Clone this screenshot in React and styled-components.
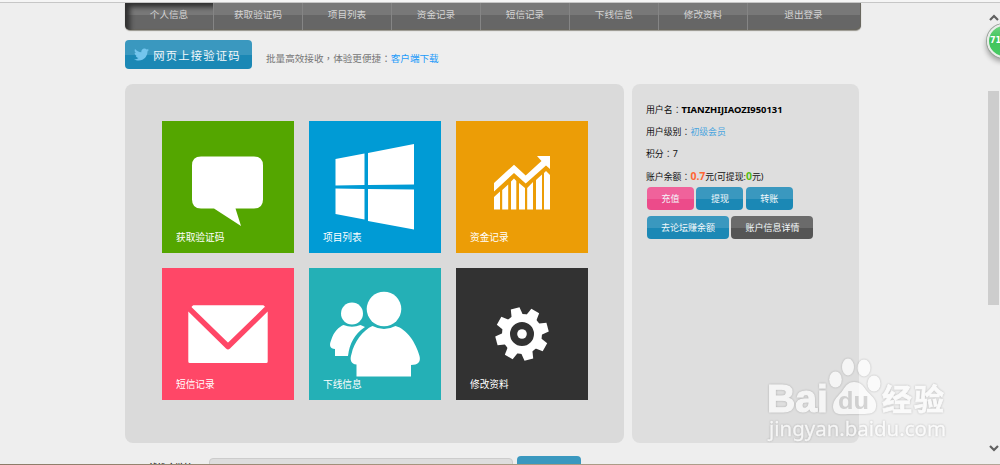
import React from 'react';
import styled, { createGlobalStyle, css } from 'styled-components';
import { FaTwitter } from 'react-icons/fa';

const GlobalStyle = createGlobalStyle`
  * {
    box-sizing: border-box;
  }

  body {
    margin: 0;
    background: #eeeeee;
    font-family: 'Noto Sans', 'Noto Sans CJK SC', sans-serif;
    overflow: hidden;
  }
`;

const Screen = styled.div`
  position: relative;
  display: flex;
  justify-content: space-between;
  width: 1000px;
  height: 465px;
  padding-top: 3px;
  background: linear-gradient(#f5f5f5 2px, #c6c6c6 2px, #c6c6c6 3px, #eeeeee 3px);
  overflow: hidden;
`;

const Content = styled.main`
  width: 736px;
  height: 462px;
  margin-left: 125px;
`;

const Nav = styled.nav`
  display: flex;
  height: 27px;
  border-radius: 0 0 5px 5px;
  background: linear-gradient(#787878 12px, #666666 12px);
  box-shadow: 0 1px 1px #96948c, inset -1px -1px 0 #69675f;
  overflow: hidden;
`;

const NavItem = styled.a`
  flex: ${({ $last }) => ($last ? '1' : '0 0 89px')};
  padding-right: ${({ $last }) => ($last ? 2 : 0)}px;
  font-size: 9.6px;
  line-height: 24px;
  text-align: center;
  color: #d4d4d4;
  border-right: ${({ $last }) => ($last ? 'none' : '1px solid #858585')};
  ${({ $active }) => $active && css`
    box-shadow: inset 5px 4px 5px #303030;
  `}
`;

const buttonColors = {
  blue: ['#3a98bf', '#1b88b5'],
  pink: ['#f0629b', '#ec4b8a'],
  gray: ['#6b6b6b', '#555555'],
};

const Button = styled.button`
  display: flex;
  align-items: center;
  justify-content: center;
  width: ${({ $width }) => $width}px;
  height: 23px;
  padding: 0;
  border: 0;
  border-radius: 4px;
  font: 9px 'Noto Sans', 'Noto Sans CJK SC', sans-serif;
  color: #f4f9fb;
  background: ${({ $color }) => {
    const [top, bottom] = buttonColors[$color];
    return `linear-gradient(${top} 50%, ${bottom} 50%)`;
  }};
`;

const Intro = styled.div`
  display: flex;
  height: 30px;
  margin-top: 10px;
`;

const OnlineButton = styled(Button)`
  height: 29px;
  gap: 4px;
  padding-right: 2px;
  font-size: 11.3px;
  letter-spacing: 1.2px;

  svg {
    width: 15px;
    height: 15px;
    color: #73c5ed;
  }
`;

const Tip = styled.p`
  margin: 11px 0 0 14px;
  font-size: 9.6px;
  line-height: 15px;
  color: #777777;

  a {
    color: #1c9bfa;
  }
`;

/* centred full-width punctuation */
const Mark = styled.span`
  font-family: 'Noto Sans CJK TC', sans-serif;
  line-height: 1;
`;

const Panels = styled.div`
  display: flex;
  gap: 8px;
  height: 359px;
  margin-top: 14px;
`;

const TilePanel = styled.section`
  display: grid;
  grid-template-columns: repeat(3, 132px);
  grid-auto-rows: 132px;
  gap: 15px;
  width: 499px;
  padding: 37px 0 0 37px;
  border-radius: 8px;
  background: #dadada;
`;

const Tile = styled.a`
  position: relative;
  display: block;
  background: ${({ $color }) => $color};

  svg {
    display: block;
    width: 132px;
    height: 132px;
  }
`;

const TileLabel = styled.span`
  position: absolute;
  left: 14px;
  bottom: 8px;
  font-size: 9.7px;
  line-height: 14px;
  color: #ffffff;
`;

const AccountPanel = styled.aside`
  width: 227px;
  padding: 15px 0 0 15px;
  border-radius: 8px;
  background: #dedede;
`;

const InfoRow = styled.div`
  height: 22px;
  margin-left: -1px;
  font-size: 8.9px;
  line-height: 22px;
  white-space: nowrap;
  color: #111111;

  b {
    font-size: 9.4px;
    color: #000000;
  }
`;

const LevelLink = styled.a`
  color: #4aa5df;
`;

const Amount = styled.strong`
  font-size: 10.5px;
  color: ${({ $color }) => $color};
`;

const ButtonRow = styled.div`
  display: flex;
  gap: 2.4px;
  margin-bottom: 6px;
`;

const PromoRow = styled.div`
  display: flex;
  height: 10px;
  margin-top: 12px;
  overflow: hidden;
`;

const PromoLabel = styled.span`
  width: 69px;
  margin-left: 15px;
  padding-top: 5px;
  font-size: 8.8px;
  line-height: 16px;
  font-weight: 700;
  color: #333333;
`;

const PromoInput = styled.div`
  width: 304px;
  height: 24px;
  margin: 3px 4px 0 0;
  border: 1px solid #cccccc;
  border-radius: 4px;
  background: #dddddd;
`;

const PromoButton = styled(Button)`
  flex: none;
  height: 28px;
  margin-top: 1px;
`;

const Scrollbar = styled.div`
  display: flex;
  flex-direction: column;
  align-items: center;
  width: 13px;
  height: 462px;

  svg {
    width: 10px;
    height: 7px;
    fill: none;
    stroke: #606060;
    stroke-width: 2.2;
  }
`;

const ScrollTrack = styled.div`
  flex: 1;
  width: 11px;
  padding-top: 70px;
`;

const ScrollThumb = styled.div`
  height: 214px;
  background: #cdcdcd;
`;

const ScrollUp = styled.svg`
  margin-top: 11px;
`;

const ScrollDown = styled.svg`
  margin-bottom: 13px;
`;

const SpeedBall = styled.div`
  position: absolute;
  top: 24px;
  left: 987px;
  width: 34px;
  height: 34px;
  padding-left: 1px;
  border: 2px solid #e9ede9;
  border-radius: 50%;
  background: linear-gradient(#6fd37f, #3fc45b 45%, #49cb64);
  box-shadow: 0 0 0 1px #9aa39b, -1px 4px 5px rgba(0, 0, 0, 0.3);
  font: bold 8px/30px 'DejaVu Sans', sans-serif;
  color: #ffffff;
`;

const Watermark = styled.svg`
  position: absolute;
  left: 755px;
  top: 345px;
  width: 200px;
  height: 105px;
  filter: drop-shadow(0 0 1px rgba(0, 0, 0, 0.3));
  opacity: 0.72;
`;

const BottomEdge = styled.div`
  position: absolute;
  left: 0;
  right: 0;
  bottom: 0;
  height: 1px;
  background: linear-gradient(90deg, #8c7b68, #a8977f 45%, #b3a698);
`;

const ChatIcon = () => (
  <svg viewBox="0 0 132 132" fill="#fff">
    <path d="M39 35.500h53q9 0 9 9v34q0 9-9 9H73.500L79 105 52 87.500H39q-9 0-9-9v-34q0-9 9-9Z" />
  </svg>
);

const WindowsIcon = () => (
  <svg viewBox="0 0 132 132" fill="#fff">
    <path d="M26.500 38 55.500 32.500V64L26.500 64.500ZM59 32 105 23V63.500L59 64ZM26.500 67.500 55.500 68V98.500L26.500 93ZM59 68 105 68.500V108.500L59 100Z" />
  </svg>
);

const ChartIcon = () => (
  <svg viewBox="0 0 132 132" fill="#fff">
    <path d="M38 62 58 43.700 69.700 54.500 85.500 40 81 35H94V48L90 44.500 69.700 62.500 58 52 38 70.500Z" />
    <path d="M38 76 44 70.500V88.500H38ZM46.200 69 52.200 63.500V88.500H46.200ZM55 60.500 58 57.500 60.300 60V88.500H55ZM63 62 69 67V88.500H63ZM71.200 67 77 61V88.500H71.200ZM80 59 86 53.500V88.500H80ZM88 52 90 50 94 54V88.500H88Z" />
  </svg>
);

const MailIcon = () => (
  <svg viewBox="0 0 132 132" fill="#fff">
    <path d="M32 37.300H102q3 1.500 1 4.500L70 73.500q-4 3-8 0L30.500 42q-1.500-3 1.500-4.700Z" transform="translate(-.7 0)" />
    <path d="M26.300 43.500 64 80.500q2 2 4 0L105.700 43.500V93.500q0 1.500-1.500 1.500H27.800q-1.500 0-1.500-1.500Z" />
    <path d="M28 40.500 66 77.500 104 40.500" fill="none" stroke="#ff4767" strokeWidth="4" />
  </svg>
);

const UsersIcon = () => (
  <svg viewBox="0 0 132 132" fill="#fff">
    <circle cx="43" cy="45.500" r="11" />
    <path d="M34.500 57Q43 60.500 51.500 57L56 59Q41 69 39 88H26V81C21 81 20 77 22 72.500 25 63 30 59 34.500 57Z" />
    <circle cx="75" cy="41" r="17.300" />
    <path d="M63.500 58Q75 64 86.500 58C98 61 107 75 110.500 88 112 94 109 97 102 97V108.500H47.500V96.500C42 96 40.500 92 42.500 86 45 74 54 62 63.500 58Z" />
  </svg>
);

const toothAngles = [-15, 30, 75, 120, 165, 210, 255, 300];

const GearIcon = () => (
  <svg viewBox="0 0 132 132" fill="#fff">
    <circle cx="66" cy="66" r="16" fill="none" stroke="#fff" strokeWidth="8" />
    {toothAngles.map((angle) => (
      <path key={angle} d="M61.500 39.500H70.500L72 49H60Z" transform={`rotate(${angle} 66 66)`} />
    ))}
    <circle cx="66" cy="66" r="4.800" />
  </svg>
);

const PawLogo = () => (
  <Watermark viewBox="0 0 200 105" fill="#fff">
    <ellipse cx="80.500" cy="34.500" rx="6.300" ry="8" />
    <ellipse cx="93" cy="22" rx="6" ry="8.500" />
    <ellipse cx="109" cy="23" rx="6.500" ry="8.500" />
    <ellipse cx="119" cy="38.500" rx="6.500" ry="8" />
    <path d="M99 37C105 37 108 40 111 45 116 51 122 54 121 62 120 70 113 69 99 69S79 71 78 62C78 54 84 51 88 45 91 40 94 37 99 37Z" />
    <text x="12" y="67" fontFamily="Liberation Sans" fontSize="38" fontWeight="700" stroke="#fff" strokeWidth="1" textLength="61" lengthAdjust="spacingAndGlyphs">Bai</text>
    <text x="83" y="64" fontFamily="Liberation Sans" fontSize="24" fontWeight="700" fill="#cbcbcb" textLength="31" lengthAdjust="spacingAndGlyphs">du</text>
    <text x="127" y="65" fontFamily="Noto Sans CJK SC" fontSize="30" fontWeight="700" stroke="#fff" strokeWidth="0.7" textLength="62">经验</text>
    <text x="14" y="91" fontFamily="Noto Sans" fontSize="20" stroke="#fff" strokeWidth="0.3" textLength="177" lengthAdjust="spacingAndGlyphs">jingyan.baidu.com</text>
  </Watermark>
);

const navItems = ['个人信息', '获取验证码', '项目列表', '资金记录', '短信记录', '下线信息', '修改资料', '退出登录'];

const tiles = [
  { label: '获取验证码', color: '#54a600', Icon: ChatIcon },
  { label: '项目列表', color: '#009bd5', Icon: WindowsIcon },
  { label: '资金记录', color: '#ec9d06', Icon: ChartIcon },
  { label: '短信记录', color: '#ff4767', Icon: MailIcon },
  { label: '下线信息', color: '#24b0b6', Icon: UsersIcon },
  { label: '修改资料', color: '#323232', Icon: GearIcon },
];

const App = () => (
  <>
    <GlobalStyle />
    <Screen>
      <Content>
        <Nav>
          {navItems.map((item, index) => (
            <NavItem key={item} $active={index === 0} $last={index === navItems.length - 1}>
              {item}
            </NavItem>
          ))}
        </Nav>

        <Intro>
          <OnlineButton $color="blue" $width={127}>
            <FaTwitter />
            网页上接验证码
          </OnlineButton>
          <Tip>批量高效接收<Mark>，</Mark>体验更便捷<Mark>：</Mark><a>客户端下载</a></Tip>
        </Intro>

        <Panels>
          <TilePanel>
            {tiles.map(({ label, color, Icon }) => (
              <Tile key={label} $color={color}>
                <Icon />
                <TileLabel>{label}</TileLabel>
              </Tile>
            ))}
          </TilePanel>

          <AccountPanel>
            <InfoRow>用户名<Mark>：</Mark><b>TIANZHIJIAOZI950131</b></InfoRow>
            <InfoRow>用户级别<Mark>：</Mark><LevelLink>初级会员</LevelLink></InfoRow>
            <InfoRow>积分<Mark>：</Mark>7</InfoRow>
            <InfoRow>
              账户余额<Mark>：</Mark><Amount $color="#ff6633">0.7</Amount>元(可提现:<Amount $color="#55bb11">0</Amount>元)
            </InfoRow>
            <ButtonRow>
              <Button $color="pink" $width={47}>充值</Button>
              <Button $color="blue" $width={47}>提现</Button>
              <Button $color="blue" $width={47}>转账</Button>
            </ButtonRow>
            <ButtonRow>
              <Button $color="blue" $width={82}>去论坛赚余额</Button>
              <Button $color="gray" $width={82}>账户信息详情</Button>
            </ButtonRow>
          </AccountPanel>
        </Panels>

        <PromoRow>
          <PromoLabel>下线推广链接：</PromoLabel>
          <PromoInput />
          <PromoButton $color="blue" $width={64} />
        </PromoRow>
      </Content>

      <Scrollbar>
        <ScrollUp viewBox="0 0 10 7"><path d="M1 6 5 2 9 6" /></ScrollUp>
        <ScrollTrack>
          <ScrollThumb />
        </ScrollTrack>
        <ScrollDown viewBox="0 0 10 7"><path d="M1 1 5 5 9 1" /></ScrollDown>
      </Scrollbar>

      <PawLogo />
      <SpeedBall>71</SpeedBall>
      <BottomEdge />
    </Screen>
  </>
);

export default App;
